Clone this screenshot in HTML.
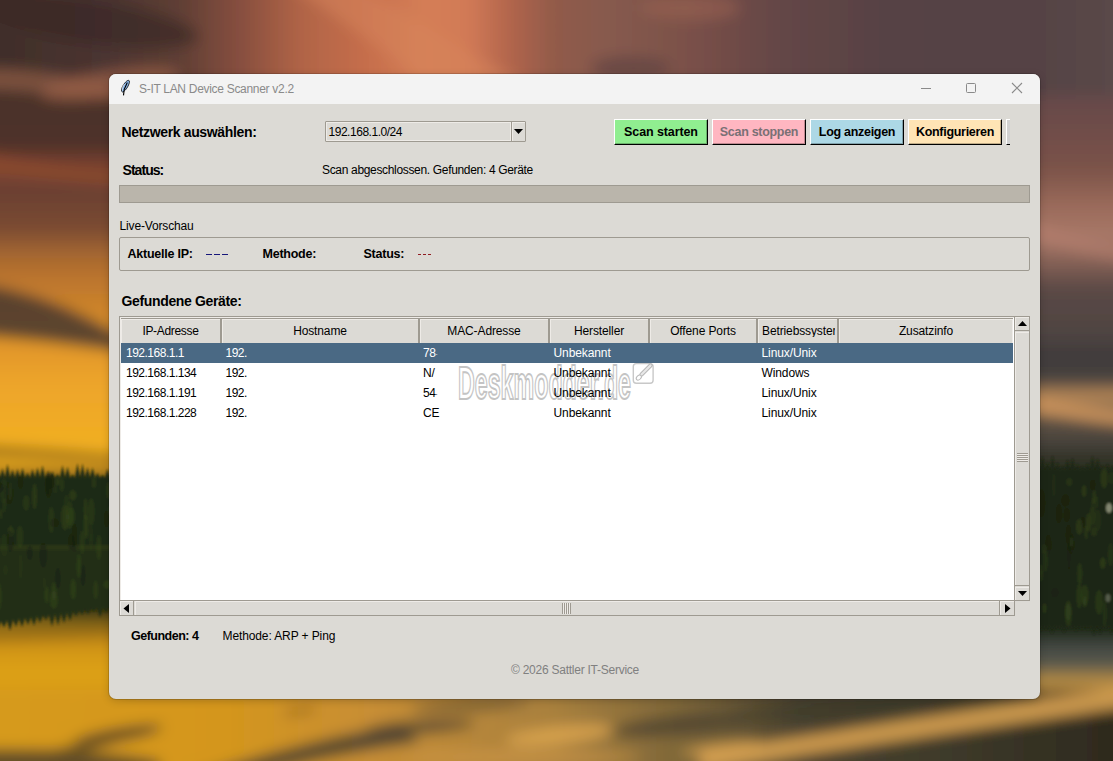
<!DOCTYPE html>
<html><head><meta charset="utf-8">
<style>
html,body{margin:0;padding:0;width:1113px;height:761px;overflow:hidden;background:#5a4040;}
body{position:relative;font-family:"Liberation Sans",sans-serif;color:#000;}
.t{position:absolute;white-space:pre;line-height:1;font-size:12px;}
.bx{position:absolute;box-sizing:border-box;}
.b{font-weight:bold;}
#bg{position:absolute;left:0;top:0;}
#win{position:absolute;left:109px;top:74px;width:931px;height:625px;border-radius:7px;overflow:hidden;background:#dcdad5;box-shadow:0 0 0 1px rgba(0,0,0,0.14),0 2px 8px rgba(0,0,0,0.18);}
#tb{position:absolute;left:0;top:0;width:931px;height:30px;background:#f3f3f3;}
.btn{position:absolute;top:119px;height:26px;box-sizing:border-box;border-top:1px solid #fff;border-left:1px solid #fff;border-right:1px solid #000;border-bottom:1px solid #000;box-shadow:inset -1px -1px 0 rgba(0,0,0,0.25);}
.btn span{position:absolute;left:0;right:0;top:6px;text-align:center;font-weight:bold;font-size:12.5px;line-height:1;white-space:pre;letter-spacing:-0.3px;}
.hd{position:absolute;top:318px;height:25px;box-sizing:border-box;background:#dcdad5;border-top:1px solid #9e9a91;border-right:2px solid #9e9a91;box-shadow:inset 1px 1px 0 #eeebe7;}
.hd span{position:absolute;left:0;right:0;top:6px;text-align:center;font-size:12px;line-height:1;white-space:pre;letter-spacing:-0.12px;}
.rw{position:absolute;left:121px;width:892px;height:20px;}
.rw span{position:absolute;top:4px;font-size:12px;line-height:1;white-space:pre;letter-spacing:-0.1px;}
.rw span.d{letter-spacing:-0.5px;}
.sel{background:#4a6984;color:#fff;}
</style></head><body>
<svg id="bg" width="1113" height="761" viewBox="0 0 1113 761">
<defs>
<filter id="b8" x="-10%" y="-10%" width="120%" height="120%" filterUnits="userSpaceOnUse"><feGaussianBlur stdDeviation="7"/></filter>
<filter id="b2"><feGaussianBlur stdDeviation="1.2"/></filter>
<filter id="b4" x="-50%" y="-50%" width="200%" height="200%"><feGaussianBlur stdDeviation="4"/></filter>
<linearGradient id="gtop" x1="0" y1="0" x2="1113" y2="0" gradientUnits="userSpaceOnUse"><stop offset="0" stop-color="#402e2a"/><stop offset="0.09" stop-color="#4a3430"/><stop offset="0.16" stop-color="#5e3e34"/><stop offset="0.22" stop-color="#8a5040"/><stop offset="0.27" stop-color="#b06446"/><stop offset="0.33" stop-color="#c66e4c"/><stop offset="0.38" stop-color="#d47e56"/><stop offset="0.42" stop-color="#d27a56"/><stop offset="0.46" stop-color="#b0644c"/><stop offset="0.5" stop-color="#905a4a"/><stop offset="0.55" stop-color="#865a4e"/><stop offset="0.62" stop-color="#7a5048"/><stop offset="0.7" stop-color="#644646"/><stop offset="0.8" stop-color="#564244"/><stop offset="0.92" stop-color="#544244"/><stop offset="1" stop-color="#5a4848"/></linearGradient>
<linearGradient id="gleft" x1="0" y1="0" x2="0" y2="761" gradientUnits="userSpaceOnUse"><stop offset="0" stop-color="#3e2e2a"/><stop offset="0.075" stop-color="#42302a"/><stop offset="0.1" stop-color="#5e4034"/><stop offset="0.13" stop-color="#4a3028"/><stop offset="0.19" stop-color="#4e302a"/><stop offset="0.22" stop-color="#7e4430"/><stop offset="0.25" stop-color="#6a4030"/><stop offset="0.3" stop-color="#7a4a30"/><stop offset="0.33" stop-color="#a06430"/><stop offset="0.36" stop-color="#b8722e"/><stop offset="0.45" stop-color="#e09428"/><stop offset="0.5" stop-color="#eca42c"/><stop offset="0.55" stop-color="#f0aa26"/><stop offset="0.6" stop-color="#f0b01e"/><stop offset="0.62" stop-color="#c48a1c"/><stop offset="0.63" stop-color="#2a3014"/><stop offset="0.8" stop-color="#1e2810"/><stop offset="0.82" stop-color="#8a6a18"/><stop offset="0.835" stop-color="#b07c18"/><stop offset="0.85" stop-color="#d09418"/><stop offset="0.88" stop-color="#dca018"/><stop offset="0.95" stop-color="#d49818"/><stop offset="1" stop-color="#b08020"/></linearGradient>
<linearGradient id="gright" x1="0" y1="0" x2="0" y2="761" gradientUnits="userSpaceOnUse"><stop offset="0" stop-color="#5a4848"/><stop offset="0.12" stop-color="#644848"/><stop offset="0.22" stop-color="#7a5248"/><stop offset="0.27" stop-color="#9a6a5a"/><stop offset="0.31" stop-color="#a87868"/><stop offset="0.34" stop-color="#8a6458"/><stop offset="0.38" stop-color="#5a4845"/><stop offset="0.44" stop-color="#4e4442"/><stop offset="0.47" stop-color="#3e3a3a"/><stop offset="0.5" stop-color="#4a4440"/><stop offset="0.52" stop-color="#c08c58"/><stop offset="0.54" stop-color="#6a5a48"/><stop offset="0.58" stop-color="#48423c"/><stop offset="0.61" stop-color="#2a2e20"/><stop offset="0.83" stop-color="#1e2814"/><stop offset="0.845" stop-color="#3e4440"/><stop offset="0.875" stop-color="#5a5a4e"/><stop offset="0.89" stop-color="#a88444"/><stop offset="0.91" stop-color="#c89442"/><stop offset="0.93" stop-color="#5a4834"/><stop offset="0.96" stop-color="#3a3024"/><stop offset="1" stop-color="#2e281e"/></linearGradient>
<linearGradient id="gbot" x1="0" y1="0" x2="1113" y2="0" gradientUnits="userSpaceOnUse"><stop offset="0" stop-color="#d69a1a"/><stop offset="0.2" stop-color="#d4961c"/><stop offset="0.33" stop-color="#c88e34"/><stop offset="0.5" stop-color="#a8803e"/><stop offset="0.62" stop-color="#7a6438"/><stop offset="0.72" stop-color="#4a4230"/><stop offset="0.85" stop-color="#3e3a2a"/><stop offset="1" stop-color="#2e2a1e"/></linearGradient>
</defs>
<g filter="url(#b8)">
<rect x="-40" y="-40" width="1193" height="841" fill="#5a4a40"/>
<rect x="-40" y="-40" width="1193" height="150" fill="url(#gtop)"/>
<rect x="-40" y="95" width="165" height="706" fill="url(#gleft)"/>
<rect x="1025" y="95" width="128" height="706" fill="url(#gright)"/>
<rect x="-40" y="690" width="1193" height="111" fill="url(#gbot)"/>
<path d="M-40 282 C30 288 80 312 125 338 L125 352 C80 346 30 338 -40 334 Z" fill="#4e3c30" opacity="0.9"/>
<path d="M-40 70 C30 65 80 80 125 90 L125 100 C80 95 30 90 -40 88 Z" fill="#8a5a44" opacity="0.8"/>
<path d="M-40 150 C30 160 80 170 125 175 L125 185 C80 182 30 175 -40 170 Z" fill="#8e4a30" opacity="0.8"/>
<path d="M-40 445 C30 448 80 452 125 456 L125 462 C80 460 30 456 -40 455 Z" fill="#6a4a18" opacity="0.8"/>
<path d="M-40 636 C30 634 80 630 125 626 L125 631 C80 636 30 640 -40 642 Z" fill="#7a5818" opacity="0.6"/>





<ellipse cx="85" cy="746" rx="40" ry="5" transform="rotate(-14 85 746)" fill="#5a4420" opacity="0.7"/>
<ellipse cx="118" cy="735" rx="45" ry="6" transform="rotate(-10 118 735)" fill="#3e3428" opacity="0.9"/>
<path d="M-40 750 C40 748 100 750 160 761 L160 800 L-40 800 Z" fill="#4e4028" opacity="0.85"/>
<path d="M180 780 C250 758 320 738 400 724 L420 742 C340 754 270 768 220 790 Z" fill="#4a4030" opacity="0.9"/>
<ellipse cx="300" cy="711" rx="18" ry="3" transform="rotate(-8 300 711)" fill="#7a5418" opacity="0.7"/>
<ellipse cx="470" cy="706" rx="60" ry="5" transform="rotate(-3 470 706)" fill="#5a4a30" opacity="0.8"/>
<ellipse cx="420" cy="727" rx="55" ry="7" transform="rotate(-4 420 727)" fill="#4e4230" opacity="0.8"/>
<ellipse cx="560" cy="735" rx="55" ry="9" transform="rotate(-6 560 735)" fill="#e0a850" opacity="0.8"/>
<ellipse cx="680" cy="725" rx="70" ry="10" transform="rotate(-6 680 725)" fill="#4e4430" opacity="0.8"/>
<ellipse cx="520" cy="757" rx="120" ry="6" fill="#d09848" opacity="0.7"/>
<ellipse cx="720" cy="748" rx="40" ry="5" transform="rotate(-8 720 748)" fill="#e0a850" opacity="0.7"/>
<ellipse cx="880" cy="706" rx="150" ry="10" transform="rotate(-4 880 706)" fill="#3a3828" opacity="0.6"/>
<path d="M700 752 C820 735 950 712 1153 683 L1153 703 C950 732 820 752 700 770 Z" fill="#dca452" opacity="0.9"/>
<path d="M1025 400 C1060 402 1090 408 1153 415 L1153 428 C1090 422 1060 416 1025 412 Z" fill="#e0a060" opacity="0.8"/>
<path d="M1025 220 C1060 230 1090 245 1153 250 L1153 265 C1090 258 1060 248 1025 240 Z" fill="#b88070" opacity="0.6"/>
<path d="M300 -40 C380 -10 440 40 520 80 L600 120 L480 120 C420 80 360 30 250 -40 Z" fill="#d8865c" opacity="0.5"/>
<ellipse cx="90" cy="22" rx="110" ry="22" transform="rotate(8 90 22)" fill="#3a2a26" opacity="0.7"/>
<ellipse cx="110" cy="84" rx="70" ry="13" transform="rotate(-8 110 84)" fill="#9a6048" opacity="0.75"/>
<ellipse cx="630" cy="68" rx="40" ry="12" fill="#5a4040" opacity="0.6"/>
<ellipse cx="690" cy="8" rx="50" ry="12" fill="#9a6252" opacity="0.6"/>
</g>
<g filter="url(#b2)">
<path d="M-5 560 L-5.0 478.0 L-2.5 469.6 L0.0 478.0 L2.5 468.3 L5.0 478.0 L7.5 463.9 L10.0 478.0 L12.5 469.4 L15.0 478.0 L17.5 468.9 L20.0 478.0 L22.5 468.0 L25.0 478.0 L27.5 472.8 L30.0 478.0 L32.5 468.9 L35.0 478.0 L37.5 467.4 L40.0 478.0 L42.5 465.5 L45.0 478.0 L47.5 473.9 L50.0 478.0 L52.5 471.4 L55.0 478.0 L57.5 473.9 L60.0 478.0 L62.5 465.3 L65.0 478.0 L67.5 466.7 L70.0 478.0 L72.5 474.5 L75.0 478.0 L77.5 463.2 L80.0 478.0 L82.5 463.4 L85.0 478.0 L87.5 467.2 L90.0 478.0 L92.5 467.6 L95.0 478.0 L97.5 473.1 L100.0 478.0 L102.5 474.8 L105.0 478.0 L107.5 468.7 L110.0 478.0 L112.5 474.3 L115.0 478.0 L117.5 472.7 L120.0 478.0 L122.5 472.1 L125.0 478.0 L127.5 474.6 L125 478.0 L125 560 Z" fill="#1e2a12"/>
<rect x="-5" y="545" width="130" height="6" fill="#34401c" opacity="0.5"/>
<path d="M-5 550 L-5.0 622.0 L-2.0 628.6 L1.0 621.2 L4.0 627.6 L7.0 620.3 L10.0 630.7 L13.0 619.5 L16.0 626.7 L19.0 618.6 L22.0 627.0 L25.0 617.8 L28.0 624.8 L31.0 617.0 L34.0 625.6 L37.0 616.1 L40.0 622.7 L43.0 615.3 L46.0 620.1 L49.0 614.4 L52.0 626.4 L55.0 613.6 L58.0 625.6 L61.0 612.8 L64.0 623.2 L67.0 611.9 L70.0 621.0 L73.0 611.1 L76.0 616.2 L79.0 610.2 L82.0 614.5 L85.0 609.4 L88.0 614.3 L91.0 608.6 L94.0 611.3 L97.0 607.7 L100.0 617.4 L103.0 606.9 L106.0 612.9 L109.0 606.0 L112.0 616.5 L115.0 605.2 L118.0 611.1 L121.0 604.4 L124.0 615.9 L125 603.8 L125 550 Z" fill="#222e14"/>
<path d="M1025 560 L1025.0 470.0 L1027.5 456.8 L1030.0 470.0 L1032.5 467.0 L1035.0 470.0 L1037.5 464.5 L1040.0 470.0 L1042.5 456.1 L1045.0 470.0 L1047.5 461.4 L1050.0 470.0 L1052.5 455.2 L1055.0 470.0 L1057.5 462.2 L1060.0 470.0 L1062.5 466.1 L1065.0 470.0 L1067.5 459.4 L1070.0 470.0 L1072.5 457.7 L1075.0 470.0 L1077.5 463.8 L1080.0 470.0 L1082.5 466.0 L1085.0 470.0 L1087.5 463.0 L1090.0 470.0 L1092.5 455.4 L1095.0 470.0 L1097.5 457.9 L1100.0 470.0 L1102.5 465.6 L1105.0 470.0 L1107.5 464.0 L1110.0 470.0 L1112.5 465.8 L1115.0 470.0 L1117.5 466.3 L1120.0 470.0 L1122.5 457.4 L1120 470.0 L1120 560 Z" fill="#1c2612"/>
<path d="M1025 550 L1025.0 626.0 L1028.0 629.4 L1031.0 626.0 L1034.0 632.5 L1037.0 626.0 L1040.0 631.6 L1043.0 626.0 L1046.0 629.5 L1049.0 626.0 L1052.0 633.9 L1055.0 626.0 L1058.0 629.0 L1061.0 626.0 L1064.0 633.1 L1067.0 626.0 L1070.0 628.9 L1073.0 626.0 L1076.0 631.4 L1079.0 626.0 L1082.0 629.7 L1085.0 626.0 L1088.0 630.2 L1091.0 626.0 L1094.0 635.8 L1097.0 626.0 L1100.0 634.4 L1103.0 626.0 L1106.0 630.4 L1109.0 626.0 L1112.0 635.1 L1115.0 626.0 L1118.0 629.7 L1120 626.0 L1120 550 Z" fill="#1e2814"/>
<ellipse cx="44.3" cy="582.5" rx="1.6" ry="5.5" fill="#2c3a18" opacity="0.45"/>
<ellipse cx="50.2" cy="481.1" rx="3.6" ry="7.9" fill="#182010" opacity="0.45"/>
<ellipse cx="4.3" cy="505.0" rx="1.5" ry="7.7" fill="#34441c" opacity="0.45"/>
<ellipse cx="72.8" cy="495.3" rx="3.6" ry="5.4" fill="#3a4a20" opacity="0.45"/>
<ellipse cx="43.3" cy="555.3" rx="3.8" ry="12.2" fill="#182010" opacity="0.45"/>
<ellipse cx="26.2" cy="502.8" rx="3.2" ry="7.9" fill="#34441c" opacity="0.45"/>
<ellipse cx="55.3" cy="489.4" rx="1.8" ry="4.4" fill="#2c3a18" opacity="0.45"/>
<ellipse cx="115.3" cy="508.6" rx="2.1" ry="12.2" fill="#3a4a20" opacity="0.45"/>
<ellipse cx="69.6" cy="515.2" rx="3.8" ry="13.8" fill="#34441c" opacity="0.45"/>
<ellipse cx="10.8" cy="537.5" rx="2.2" ry="13.2" fill="#2c3a18" opacity="0.45"/>
<ellipse cx="20.5" cy="482.0" rx="2.5" ry="6.5" fill="#182010" opacity="0.45"/>
<ellipse cx="0.8" cy="513.8" rx="1.7" ry="5.4" fill="#34441c" opacity="0.45"/>
<ellipse cx="51.3" cy="519.7" rx="3.0" ry="13.2" fill="#34441c" opacity="0.45"/>
<ellipse cx="54.3" cy="522.9" rx="3.9" ry="4.2" fill="#182010" opacity="0.45"/>
<ellipse cx="74.5" cy="537.9" rx="2.3" ry="14.0" fill="#182010" opacity="0.45"/>
<ellipse cx="4.4" cy="545.5" rx="3.8" ry="11.4" fill="#2c3a18" opacity="0.45"/>
<ellipse cx="83.0" cy="575.2" rx="2.4" ry="10.9" fill="#182010" opacity="0.45"/>
<ellipse cx="107.6" cy="584.5" rx="3.9" ry="4.3" fill="#3a4a20" opacity="0.45"/>
<ellipse cx="57.5" cy="481.7" rx="2.4" ry="4.1" fill="#3a4a20" opacity="0.45"/>
<ellipse cx="4.0" cy="490.9" rx="4.0" ry="12.8" fill="#2c3a18" opacity="0.45"/>
<ellipse cx="86.0" cy="526.6" rx="2.6" ry="12.4" fill="#3a4a20" opacity="0.45"/>
<ellipse cx="5.5" cy="570.0" rx="2.3" ry="4.9" fill="#2c3a18" opacity="0.45"/>
<ellipse cx="-2.2" cy="594.9" rx="2.7" ry="10.1" fill="#2c3a18" opacity="0.45"/>
<ellipse cx="110.1" cy="510.7" rx="2.4" ry="5.4" fill="#2c3a18" opacity="0.45"/>
<ellipse cx="71.5" cy="542.2" rx="3.1" ry="8.4" fill="#182010" opacity="0.45"/>
<ellipse cx="106.5" cy="519.2" rx="2.0" ry="8.3" fill="#182010" opacity="0.45"/>
<ellipse cx="95.7" cy="589.7" rx="2.5" ry="9.8" fill="#34441c" opacity="0.45"/>
<ellipse cx="34.6" cy="496.3" rx="2.4" ry="13.0" fill="#3a4a20" opacity="0.45"/>
<ellipse cx="0.1" cy="487.7" rx="3.6" ry="5.1" fill="#182010" opacity="0.45"/>
<ellipse cx="53.9" cy="591.1" rx="2.5" ry="9.2" fill="#3a4a20" opacity="0.45"/>
<ellipse cx="79.0" cy="566.0" rx="2.3" ry="12.3" fill="#3a4a20" opacity="0.45"/>
<ellipse cx="29.8" cy="552.9" rx="2.9" ry="7.1" fill="#182010" opacity="0.45"/>
<ellipse cx="93.9" cy="482.3" rx="2.5" ry="5.9" fill="#34441c" opacity="0.45"/>
<ellipse cx="91.2" cy="512.0" rx="3.5" ry="13.8" fill="#34441c" opacity="0.45"/>
<ellipse cx="9.4" cy="493.1" rx="3.9" ry="10.8" fill="#182010" opacity="0.45"/>
<ellipse cx="19.9" cy="537.0" rx="3.3" ry="11.6" fill="#34441c" opacity="0.45"/>
<ellipse cx="61.9" cy="484.3" rx="2.2" ry="7.5" fill="#34441c" opacity="0.45"/>
<ellipse cx="82.2" cy="542.5" rx="2.5" ry="11.9" fill="#34441c" opacity="0.45"/>
<ellipse cx="108.3" cy="490.5" rx="1.8" ry="8.5" fill="#3a4a20" opacity="0.45"/>
<ellipse cx="73.2" cy="589.2" rx="2.9" ry="10.5" fill="#3a4a20" opacity="0.45"/>
<ellipse cx="57.8" cy="578.3" rx="2.7" ry="10.5" fill="#182010" opacity="0.45"/>
<ellipse cx="20.6" cy="566.6" rx="2.0" ry="13.0" fill="#2c3a18" opacity="0.45"/>
<ellipse cx="117.6" cy="597.3" rx="2.2" ry="11.2" fill="#182010" opacity="0.45"/>
<ellipse cx="-3.0" cy="540.6" rx="2.6" ry="9.5" fill="#2c3a18" opacity="0.45"/>
<ellipse cx="91.0" cy="538.5" rx="2.0" ry="12.7" fill="#2c3a18" opacity="0.45"/>
<ellipse cx="48.6" cy="484.2" rx="3.2" ry="13.2" fill="#182010" opacity="0.45"/>
<ellipse cx="53.8" cy="600.0" rx="3.9" ry="8.9" fill="#3a4a20" opacity="0.45"/>
<ellipse cx="113.6" cy="490.3" rx="2.6" ry="9.6" fill="#34441c" opacity="0.45"/>
<ellipse cx="98.9" cy="547.4" rx="2.8" ry="12.4" fill="#34441c" opacity="0.45"/>
<ellipse cx="65.0" cy="517.4" rx="3.9" ry="12.7" fill="#3a4a20" opacity="0.45"/>
<ellipse cx="71.2" cy="516.5" rx="3.9" ry="9.2" fill="#34441c" opacity="0.45"/>
<ellipse cx="66.6" cy="504.1" rx="2.8" ry="10.1" fill="#2c3a18" opacity="0.45"/>
<ellipse cx="-1.5" cy="596.3" rx="2.9" ry="13.9" fill="#3a4a20" opacity="0.45"/>
<ellipse cx="10.2" cy="491.2" rx="1.7" ry="9.4" fill="#34441c" opacity="0.45"/>
<ellipse cx="46.7" cy="594.8" rx="2.2" ry="8.7" fill="#3a4a20" opacity="0.45"/>
<ellipse cx="10.9" cy="532.0" rx="2.8" ry="5.1" fill="#3a4a20" opacity="0.45"/>
<ellipse cx="47.4" cy="483.5" rx="1.8" ry="11.8" fill="#182010" opacity="0.45"/>
<ellipse cx="-2.2" cy="503.3" rx="1.5" ry="6.8" fill="#34441c" opacity="0.45"/>
<ellipse cx="85.5" cy="509.3" rx="1.8" ry="11.3" fill="#3a4a20" opacity="0.45"/>
<ellipse cx="10.3" cy="541.3" rx="3.3" ry="11.0" fill="#182010" opacity="0.45"/>
<ellipse cx="1104.1" cy="478.3" rx="3.6" ry="10.2" fill="#3a4a20" opacity="0.45"/>
<ellipse cx="1079.3" cy="595.9" rx="2.8" ry="12.5" fill="#34441c" opacity="0.45"/>
<ellipse cx="1084.7" cy="594.9" rx="3.8" ry="10.3" fill="#34441c" opacity="0.45"/>
<ellipse cx="1065.4" cy="500.4" rx="3.7" ry="5.9" fill="#182010" opacity="0.45"/>
<ellipse cx="1096.8" cy="502.2" rx="1.8" ry="6.4" fill="#2c3a18" opacity="0.45"/>
<ellipse cx="1093.0" cy="511.3" rx="2.6" ry="13.4" fill="#2c3a18" opacity="0.45"/>
<ellipse cx="1079.7" cy="573.7" rx="2.5" ry="10.9" fill="#34441c" opacity="0.45"/>
<ellipse cx="1041.3" cy="503.1" rx="3.8" ry="13.7" fill="#182010" opacity="0.45"/>
<ellipse cx="1048.4" cy="545.8" rx="2.8" ry="10.9" fill="#182010" opacity="0.45"/>
<ellipse cx="1053.8" cy="484.9" rx="1.6" ry="11.6" fill="#2c3a18" opacity="0.45"/>
<ellipse cx="1084.8" cy="601.7" rx="1.9" ry="5.8" fill="#3a4a20" opacity="0.45"/>
<ellipse cx="1054.9" cy="592.6" rx="3.8" ry="5.0" fill="#182010" opacity="0.45"/>
<ellipse cx="1044.5" cy="608.2" rx="1.7" ry="5.0" fill="#3a4a20" opacity="0.45"/>
<ellipse cx="1068.5" cy="534.7" rx="2.6" ry="10.0" fill="#182010" opacity="0.45"/>
<ellipse cx="1041.0" cy="573.1" rx="2.0" ry="8.5" fill="#34441c" opacity="0.45"/>
<ellipse cx="1094.0" cy="531.7" rx="3.0" ry="4.9" fill="#34441c" opacity="0.45"/>
<ellipse cx="1097.8" cy="520.3" rx="3.5" ry="11.0" fill="#2c3a18" opacity="0.45"/>
<ellipse cx="1102.8" cy="563.1" rx="2.9" ry="5.9" fill="#3a4a20" opacity="0.45"/>
<ellipse cx="1082.7" cy="522.7" rx="2.2" ry="5.2" fill="#182010" opacity="0.45"/>
<ellipse cx="1094.2" cy="497.4" rx="1.8" ry="7.3" fill="#3a4a20" opacity="0.45"/>
<ellipse cx="1079.3" cy="526.8" rx="3.4" ry="8.1" fill="#3a4a20" opacity="0.45"/>
<ellipse cx="1092.8" cy="484.9" rx="2.3" ry="5.0" fill="#182010" opacity="0.45"/>
<ellipse cx="1104.8" cy="613.7" rx="2.1" ry="13.4" fill="#2c3a18" opacity="0.45"/>
<ellipse cx="1088.6" cy="522.3" rx="2.9" ry="9.3" fill="#3a4a20" opacity="0.45"/>
<ellipse cx="1068.4" cy="615.0" rx="3.3" ry="11.6" fill="#34441c" opacity="0.45"/>
<ellipse cx="1111.5" cy="478.2" rx="3.3" ry="6.6" fill="#2c3a18" opacity="0.45"/>
<ellipse cx="1069.3" cy="482.1" rx="3.1" ry="4.1" fill="#34441c" opacity="0.45"/>
<ellipse cx="1058.9" cy="513.6" rx="2.9" ry="9.1" fill="#182010" opacity="0.45"/>
<ellipse cx="1110.6" cy="554.5" rx="3.1" ry="12.1" fill="#2c3a18" opacity="0.45"/>
<ellipse cx="1045.6" cy="558.7" rx="2.5" ry="13.4" fill="#2c3a18" opacity="0.45"/>
<ellipse cx="1068.2" cy="610.8" rx="2.9" ry="10.0" fill="#3a4a20" opacity="0.45"/>
<ellipse cx="1071.4" cy="544.2" rx="2.8" ry="10.0" fill="#182010" opacity="0.45"/>
<ellipse cx="1066.7" cy="515.0" rx="2.9" ry="6.8" fill="#182010" opacity="0.45"/>
<ellipse cx="1092.3" cy="516.4" rx="3.4" ry="9.9" fill="#2c3a18" opacity="0.45"/>
<ellipse cx="1086.2" cy="532.2" rx="1.6" ry="7.2" fill="#3a4a20" opacity="0.45"/>
<ellipse cx="1069.0" cy="556.4" rx="1.7" ry="13.1" fill="#182010" opacity="0.45"/>
<ellipse cx="1071.4" cy="541.9" rx="1.6" ry="5.0" fill="#34441c" opacity="0.45"/>
<ellipse cx="1099.1" cy="602.3" rx="3.9" ry="12.2" fill="#34441c" opacity="0.45"/>
<ellipse cx="1084.1" cy="491.1" rx="2.6" ry="6.0" fill="#3a4a20" opacity="0.45"/>
<ellipse cx="1043.8" cy="548.9" rx="2.4" ry="5.4" fill="#2c3a18" opacity="0.45"/>
<ellipse cx="1109" cy="508" rx="3" ry="5" fill="#c8c8b0" opacity="0.6"/>
<ellipse cx="1108" cy="598" rx="2.5" ry="4" fill="#8a9080" opacity="0.5"/>
</g>
</svg>

<div id="win"><div id="tb"></div></div>

<!-- title bar -->
<svg style="position:absolute;left:119px;top:79px" width="14" height="18" viewBox="0 0 14 18">
<path d="M9.7 1.3 C10.9 1.8 10.6 4 9.1 7 C7.6 10 5.1 12.8 3.4 13 C2 12.6 2.2 10 3.6 7.5 C5 4.6 8 1 9.7 1.3 Z" fill="#8ab6ea" stroke="#151515" stroke-width="0.9"/>
<path d="M3.2 11.5 C3 9.5 4 7 5.5 5" fill="none" stroke="#fff" stroke-width="0.8" opacity="0.8"/>
<path d="M8.3 3.6 L5.2 10.5 L4.5 16.4" fill="none" stroke="#000" stroke-width="1.1"/>
</svg>
<div class="t" style="left:139px;top:83px;color:#8a8a8a;letter-spacing:-0.3px;">S-IT LAN Device Scanner v2.2</div>
<div class="bx" style="left:921px;top:88px;width:10px;height:1px;background:#8a8a8a;"></div>
<div class="bx" style="left:966px;top:83px;width:10px;height:10px;border:1px solid #8a8a8a;border-radius:1.5px;"></div>
<svg style="position:absolute;left:1011px;top:82px" width="12" height="12" viewBox="0 0 12 12"><path d="M1 1 L11 11 M11 1 L1 11" stroke="#8a8a8a" stroke-width="1.1" fill="none"/></svg>

<!-- row 1 -->
<div class="t b" style="left:121.5px;top:125px;font-size:14px;letter-spacing:-0.35px;">Netzwerk auswählen:</div>
<div class="bx" style="left:325px;top:121px;width:201px;height:21px;border:1px solid #9e9a91;border-radius:1px;background:#dcdad5;"></div>
<div class="bx" style="left:326px;top:122px;width:185px;height:19px;box-shadow:inset 1px 1px 0 #eeebe7,inset -1px -1px 0 #eeebe7;"></div>
<div class="bx" style="left:511px;top:122px;width:1px;height:19px;background:#9e9a91;"></div>
<div class="bx" style="left:512px;top:122px;width:13px;height:19px;box-shadow:inset 1px 1px 0 #eeebe7;"></div>
<svg style="position:absolute;left:513px;top:128px" width="11" height="7" viewBox="0 0 11 7"><path d="M1 1 L10 1 L5.5 6 Z" fill="#000"/></svg>
<div class="t" style="left:328.5px;top:126px;letter-spacing:-0.47px;">192.168.1.0/24</div>

<div class="btn" style="left:614px;width:94px;background:#90ee90;"><span style="letter-spacing:-0.1px">Scan starten</span></div>
<div class="btn" style="left:712px;width:94px;background:#ffb6c1;"><span style="color:#7a7075;">Scan stoppen</span></div>
<div class="btn" style="left:810px;width:94px;background:#add8e6;"><span>Log anzeigen</span></div>
<div class="btn" style="left:908px;width:94px;background:#ffe4b5;"><span>Konfigurieren</span></div>
<div class="btn" style="left:1006px;width:4px;background:#d2d2d2;border-right:none;box-shadow:none;"></div>

<!-- status -->
<div class="t b" style="left:122.5px;top:163px;font-size:14px;letter-spacing:-0.95px;">Status:</div>
<div class="t" style="left:322px;top:164px;letter-spacing:-0.33px;">Scan abgeschlossen. Gefunden: 4 Geräte</div>
<div class="bx" style="left:119px;top:185px;width:911px;height:18px;border:1px solid #9e9a91;background:#bab5ab;"></div>

<!-- live -->
<div class="t" style="left:119.5px;top:220px;letter-spacing:-0.15px;">Live-Vorschau</div>
<div class="bx" style="left:119px;top:237px;width:911px;height:34px;border:1px solid #9e9a91;border-radius:2px;"></div>
<div class="t b" style="left:127.5px;top:248px;font-size:12.5px;letter-spacing:-0.24px;">Aktuelle IP:</div>
<div class="bx" style="left:206px;top:254px;width:6px;height:1px;background:#16167a;"></div>
<div class="bx" style="left:214px;top:254px;width:6px;height:1px;background:#16167a;"></div>
<div class="bx" style="left:222px;top:254px;width:6px;height:1px;background:#16167a;"></div>
<div class="t b" style="left:262.5px;top:248px;font-size:12.5px;letter-spacing:-0.24px;">Methode:</div>
<div class="t b" style="left:363.5px;top:248px;font-size:12.5px;letter-spacing:-0.24px;">Status:</div>
<div class="bx" style="left:418px;top:254px;width:3px;height:1px;background:#901c22;"></div>
<div class="bx" style="left:423px;top:254px;width:3px;height:1px;background:#901c22;"></div>
<div class="bx" style="left:428px;top:254px;width:3px;height:1px;background:#901c22;"></div>

<!-- table -->
<div class="t b" style="left:121.5px;top:294px;font-size:14px;letter-spacing:-0.35px;">Gefundene Geräte:</div>
<div class="bx" style="left:119px;top:316px;width:896px;height:285px;background:#fff;border-left:1px solid #9e9a91;border-top:1px solid #9e9a91;"></div>
<div class="bx" style="left:120px;top:317px;width:894px;height:1px;background:#eeebe7;"></div>
<div class="bx" style="left:120px;top:317px;width:1px;height:283px;background:#eeebe7;"></div>
<div class="hd" style="left:121px;width:101px;"><span style="letter-spacing:-0.32px">IP-Adresse</span></div>
<div class="hd" style="left:222px;width:198px;"><span>Hostname</span></div>
<div class="hd" style="left:420px;width:130px;"><span>MAC-Adresse</span></div>
<div class="hd" style="left:550px;width:100px;"><span>Hersteller</span></div>
<div class="hd" style="left:650px;width:108px;"><span>Offene Ports</span></div>
<div class="hd" style="left:758px;width:81px;overflow:hidden;"><span style="left:4px;right:auto;width:73px;overflow:hidden;text-align:left;">Betriebssystem</span></div>
<div class="hd" style="left:839px;width:174px;border-right:none;box-shadow:inset 1px 1px 0 #eeebe7,inset -1px 0 0 #eeebe7;"><span>Zusatzinfo</span></div>

<!-- watermark -->
<svg style="position:absolute;left:450px;top:355px" width="215" height="50" viewBox="0 0 215 50">
<text x="8" y="43.5" font-family="Liberation Sans" font-weight="bold" font-size="46" fill="#fff" stroke="#c4c4c4" stroke-width="2" textLength="173" lengthAdjust="spacingAndGlyphs">Deskmodder.de</text>
<rect x="183.3" y="8.6" width="19.8" height="19.6" rx="3" fill="#fff" stroke="#c8c8c8" stroke-width="1.4"/>
<path d="M191.5 19.5 L200.5 10.5" stroke="#b8b8b8" stroke-width="4.2" stroke-linecap="round"/>
<path d="M191.5 19.5 L200.5 10.5" stroke="#e8e8e8" stroke-width="2.2" stroke-linecap="round"/>
<ellipse cx="188.8" cy="22.6" rx="2" ry="3" transform="rotate(45 188.8 22.6)" fill="#fff" stroke="#b8b8b8" stroke-width="1"/>
</svg>
<div class="rw sel" style="top:343px;"><span class="d" style="left:5px">192.168.1.1</span><span class="d" style="left:104.5px">192.</span><span class="d" style="left:302px">78<i style="font-style:normal;font-size:8px">·</i></span><span style="left:432.5px">Unbekannt</span><span style="left:640.5px">Linux/Unix</span></div>
<div class="rw" style="top:363px;"><span class="d" style="left:5px">192.168.1.134</span><span class="d" style="left:104.5px">192.</span><span style="left:302px">N/</span><span style="left:432.5px">Unbekannt</span><span style="left:640.5px">Windows</span></div>
<div class="rw" style="top:383px;"><span class="d" style="left:5px">192.168.1.191</span><span class="d" style="left:104.5px">192.</span><span class="d" style="left:302px">54<i style="font-style:normal;font-size:8px">·</i></span><span style="left:432.5px">Unbekannt</span><span style="left:640.5px">Linux/Unix</span></div>
<div class="rw" style="top:403px;"><span class="d" style="left:5px">192.168.1.228</span><span class="d" style="left:104.5px">192.</span><span style="left:302px">CE</span><span style="left:432.5px">Unbekannt</span><span style="left:640.5px">Linux/Unix</span></div>

<!-- vertical scrollbar -->
<div class="bx" style="left:1014px;top:316px;width:16px;height:285px;background:#dcdad5;border:1px solid #9e9a91;"></div>
<div class="bx" style="left:1015px;top:317px;width:14px;height:14px;border-bottom:1px solid #9e9a91;box-shadow:inset 1px 1px 0 #eeebe7;"></div>
<svg style="position:absolute;left:1017px;top:320px" width="11" height="7" viewBox="0 0 11 7"><path d="M1 6 L10 6 L5.5 1 Z" fill="#000"/></svg>
<div class="bx" style="left:1015px;top:332px;width:14px;height:254px;box-shadow:inset 1px 1px 0 #eeebe7;border-bottom:1px solid #9e9a91;"></div>
<div class="bx" style="left:1017px;top:453px;width:11px;height:9px;background:repeating-linear-gradient(to bottom,#9e9a91 0,#9e9a91 1px,#eeebe7 1px,#eeebe7 2px);"></div>
<div class="bx" style="left:1015px;top:587px;width:14px;height:13px;box-shadow:inset 1px 1px 0 #eeebe7;"></div>
<svg style="position:absolute;left:1017px;top:590px" width="11" height="7" viewBox="0 0 11 7"><path d="M1 1 L10 1 L5.5 6 Z" fill="#000"/></svg>

<!-- horizontal scrollbar -->
<div class="bx" style="left:119px;top:600px;width:896px;height:16px;background:#dcdad5;border:1px solid #9e9a91;"></div>
<div class="bx" style="left:120px;top:601px;width:14px;height:14px;border-right:1px solid #9e9a91;box-shadow:inset 1px 1px 0 #eeebe7;"></div>
<svg style="position:absolute;left:122px;top:603px" width="8" height="11" viewBox="0 0 8 11"><path d="M7 1 L7 10 L1.5 5.5 Z" fill="#000"/></svg>
<div class="bx" style="left:135px;top:601px;width:864px;height:14px;box-shadow:inset 1px 1px 0 #eeebe7;"></div>
<div class="bx" style="left:562px;top:603px;width:9px;height:11px;background:repeating-linear-gradient(to right,#9e9a91 0,#9e9a91 1px,#eeebe7 1px,#eeebe7 2px);"></div>
<div class="bx" style="left:999px;top:601px;width:15px;height:14px;border-left:1px solid #9e9a91;box-shadow:inset 1px 1px 0 #eeebe7;"></div>
<svg style="position:absolute;left:1004px;top:603px" width="8" height="11" viewBox="0 0 8 11"><path d="M1 1 L1 10 L6.5 5.5 Z" fill="#000"/></svg>

<!-- footer -->
<div class="t b" style="left:131px;top:630px;font-size:12.5px;letter-spacing:-0.5px;">Gefunden: 4</div>
<div class="t" style="left:222.5px;top:630px;letter-spacing:-0.11px;">Methode: ARP + Ping</div>
<div class="t" style="left:511px;top:664px;color:#808080;letter-spacing:-0.25px;">© 2026 Sattler IT-Service</div>
</body></html>
